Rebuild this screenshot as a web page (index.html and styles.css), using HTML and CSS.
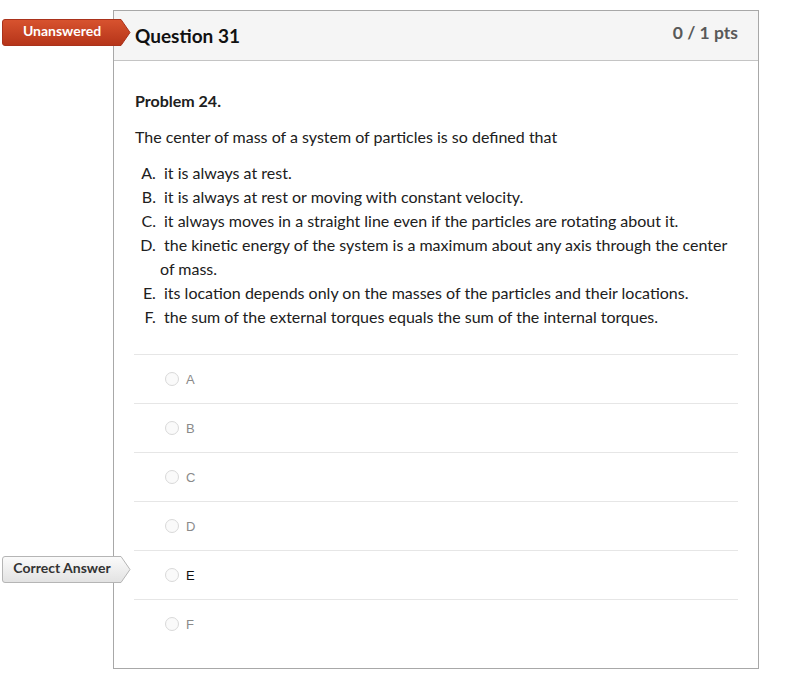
FILE: index.html
```
<!DOCTYPE html>
<html lang="en">
<head>
	<meta charset="UTF-8">
	<title>Question 31</title>
	<link rel="stylesheet" href="styles.css">
</head>
<body>
<div class="page">
	<div class="badge badge-unanswered">
		<svg class="badge-shape" viewBox="0 0 129 27" width="129" height="27">
			<defs>
				<linearGradient id="red" x1="0" y1="0" x2="0" y2="1">
					<stop offset="0" stop-color="#d8532f"/>
					<stop offset="1" stop-color="#b53419"/>
				</linearGradient>
			</defs>
			<path d="M3 0.5 H119 L128 13.5 L119 26.5 H3 A2.5 2.5 0 0 1 0.5 24 V3 A2.5 2.5 0 0 1 3 0.5 Z" fill="url(#red)" stroke="#a9321b"/>
		</svg>
		<span>Unanswered</span>
	</div>
	<div class="badge badge-correct">
		<svg class="badge-shape" viewBox="0 0 129 27" width="129" height="27">
			<defs>
				<linearGradient id="grey" x1="0" y1="0" x2="0" y2="1">
					<stop offset="0" stop-color="#fbfbfb"/>
					<stop offset="1" stop-color="#e2e2e2"/>
				</linearGradient>
			</defs>
			<path d="M3 0.5 H119 L128 13.5 L119 26.5 H3 A2.5 2.5 0 0 1 0.5 24 V3 A2.5 2.5 0 0 1 3 0.5 Z" fill="url(#grey)" stroke="#b5b5b5"/>
		</svg>
		<span>Correct Answer</span>
	</div>

	<div class="question">
		<div class="question-header">
			<h2>Question 31</h2>
			<div class="pts">0 / 1 pts</div>
		</div>
		<div class="question-body">
			<p class="problem">Problem 24.</p>
			<p class="stem">The center of mass of a system of particles is so defined that</p>
			<ol class="choices">
				<li>it is always at rest.</li>
				<li>it is always at rest or moving with constant velocity.</li>
				<li>it always moves in a straight line even if the particles are rotating about it.</li>
				<li>the kinetic energy of the system is a maximum about any axis through the center of mass.</li>
				<li>its location depends only on the masses of the particles and their locations.</li>
				<li>the sum of the external torques equals the sum of the internal torques.</li>
			</ol>
			<div class="answers">
				<div class="answer"><span class="radio"></span><span class="label">A</span></div>
				<div class="answer"><span class="radio"></span><span class="label">B</span></div>
				<div class="answer"><span class="radio"></span><span class="label">C</span></div>
				<div class="answer"><span class="radio"></span><span class="label">D</span></div>
				<div class="answer correct"><span class="radio"></span><span class="label">E</span></div>
				<div class="answer"><span class="radio"></span><span class="label">F</span></div>
			</div>
		</div>
	</div>
</div>
</body>
</html>
```

FILE: styles.css
```
* {
	box-sizing: border-box;
}

body {
	margin: 0;
	background-color: #fff;
	color: #202020;
	font-family: Lato, "Open Sans", sans-serif;
}

.page {
	position: relative;
	padding: 10px 0 0 113px;
}

/* badges sit over the left edge of the question box */
.badge {
	position: absolute;
	left: 2px;
	width: 129px;
	height: 27px;
}

.badge-shape {
	position: absolute;
	top: 0;
	left: 0;
}

.badge span {
	position: relative;
	display: block;
	width: 120px;
	line-height: 24px;
	text-align: center;
	font-size: 14px;
	font-weight: bold;
}

.badge-unanswered {
	top: 19px;
}

.badge-unanswered span {
	color: #fff;
}

.badge-correct {
	top: 556px;
}

.badge-correct span {
	color: #333;
}

.question {
	width: 646px;
	border: 1px solid #a8a8a8;
}

.question-header {
	display: flex;
	justify-content: space-between;
	height: 50px;
	padding: 0 20px 0 21px;
	background-color: #f5f5f5;
	border-bottom: 1px solid #c4c4c4;
}

.question-header h2 {
	margin: 0;
	padding-top: 13px;
	font-size: 19px;
	font-weight: bold;
	color: #111;
}

.pts {
	padding-top: 11px;
	font-size: 17.5px;
	font-weight: bold;
	color: #595959;
}

.question-body {
	padding: 30px 20px 20px 21px;
}

.problem {
	margin: 0;
	font-size: 16px;
	line-height: 20px;
	font-weight: bold;
}

.stem {
	margin: 16px 0 0;
	font-size: 16px;
	line-height: 20px;
}

.choices {
	margin: 14px 0 0;
	padding-left: 25px;
	list-style: upper-alpha;
	font-size: 16px;
	line-height: 24px;
}

.choices li {
	text-indent: 4px;
}

.answers {
	margin-top: 25px;
	margin-left: -1px;
}

.answer {
	display: flex;
	align-items: center;
	height: 49px;
	padding-left: 31px;
	border-top: 1px solid #e6e6e6;
}

.radio {
	width: 14px;
	height: 14px;
	border: 1px solid #d9d9d9;
	border-radius: 50%;
	background-color: #fafafa;
}

.label {
	margin-left: 7px;
	font-family: "Liberation Sans", Arial, sans-serif;
	font-size: 13px;
	color: #8a8a8a;
}

.answer.correct .label {
	color: #111;
}
```
